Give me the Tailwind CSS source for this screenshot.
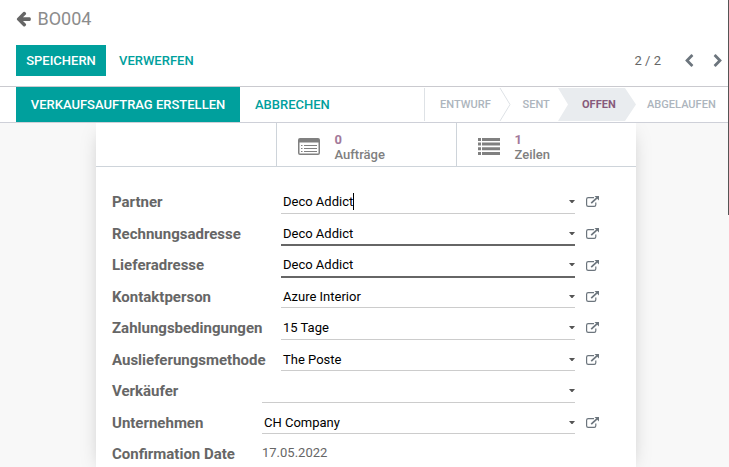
<!DOCTYPE html>
<html lang="de">
<head>
<meta charset="utf-8">
<title>BO004</title>
<script src="https://cdn.jsdelivr.net/npm/@tailwindcss/browser@4"></script>
</head>
<body class="relative flex h-[467px] w-[729px] flex-col overflow-hidden bg-[#f8f8f8] font-['Roboto',sans-serif] text-[13px] text-[#666666]">
<svg class="hidden">
  <symbol id="ext" viewBox="0 0 13 11"><path fill="none" stroke="currentColor" stroke-width="1.200" d="M8 1.600H2.200Q.6 1.600.6 3.200v5.600q0 1.600 1.600 1.600h6q1.600 0 1.600-1.600V6.500"/><path fill="none" stroke="currentColor" stroke-width="1.700" d="M5.200 7.200L11 1.800"/><path fill="currentColor" d="M8.500 0H13v4.500z"/></symbol>
  <symbol id="caret" viewBox="0 0 6 3"><path d="M0 0h6L3.500 3h-1z"/></symbol>
</svg>

<header class="h-[87px] shrink-0 border-b border-[#cacacf] bg-white">
  <div class="flex h-[45px] items-start pl-[15px]">
    <svg class="mt-[10px] h-[17px] w-[17px]" viewBox="0 0 1792 1792" fill="#666666"><path d="M1664 896v128q0 53-32.500 90.500t-84.500 37.500h-704l293 294q38 36 38 90t-38 90l-75 76q-37 37-90 37-52 0-91-37l-651-652q-37-37-37-90 0-52 37-91l651-650q38-38 91-38 52 0 90 38l75 74q38 38 38 91t-38 91l-293 293h704q52 0 84.500 37.500t32.500 90.500z"/></svg>
    <h1 class="ml-[5.500px] mt-[7px] text-[18px] leading-6 text-[#8c8c8c]">BO004</h1>
  </div>
  <div class="flex h-[31px] items-center pl-4">
    <button class="h-[31px] w-[90px] bg-[#00a09d] font-medium text-white">SPEICHERN</button>
    <button class="ml-[13px] font-medium text-[#00a09d]">VERWERFEN</button>
    <span class="ml-auto">2 / 2</span>
    <svg class="ml-[21px] h-[14px] w-[14px]" viewBox="0 0 1792 1792" fill="#6c757d"><path d="M1427 301l-531 531 531 531q19 19 19 45t-19 45l-166 166q-19 19-45 19t-45-19l-742-742q-19-19-19-45t19-45l742-742q19-19 45-19t45 19l166 166q19 19 19 45t-19 45z"/></svg>
    <svg class="ml-[15px] mr-[4px] h-[14px] w-[14px]" viewBox="0 0 1792 1792" fill="#6c757d"><path d="M1363 877l-742 742q-19 19-45 19t-45-19l-166-166q-19-19-19-45t19-45l531-531-531-531q-19-19-19-45t19-45l166-166q19-19 45-19t45 19l742 742q19 19 19 45t-19 45z"/></svg>
  </div>
</header>

<div class="relative z-10 flex h-[36px] shrink-0 border-b border-[#ced0d8] bg-white pl-4">
  <button class="h-[35px] w-[224px] bg-[#00a09d] font-medium text-white">VERKAUFSAUFTRAG ERSTELLEN</button>
  <button class="ml-[15px] font-medium text-[#00a09d]">ABBRECHEN</button>
  <div class="ml-auto mt-px flex h-[33px] w-[305px] items-center border-l border-[#dee2e6] text-[11.050px] font-medium text-[#adb5bd]">
    <span class="w-[74px] pl-[15px] pt-px">ENTWURF</span>
    <svg class="h-[33px] w-[12px]" viewBox="0 0 12 33" fill="none" stroke="#dee2e6"><path d="M1 0l10 16.500L1 33"/></svg>
    <span class="w-[47px] pl-[11.500px] pt-px">SENT</span>
    <div class="flex h-[33px] w-[78px] items-center bg-[#e9ecef] pl-[24px] pt-px font-bold text-[#875a7b] [clip-path:polygon(0_0,67px_0,100%_50%,67px_100%,0_100%,10px_50%)]">OFFEN</div>
    <span class="pl-[11px] pt-px">ABGELAUFEN</span>
  </div>
</div>

<main class="mx-auto ml-24 h-[344px] w-[540px] shrink-0 bg-white shadow-[0_5px_20px_-8px_rgba(0,0,0,0.35)]">
  <div class="flex h-[44px] justify-end border-b border-[#ced4da] text-[13px] font-medium leading-[15px] text-[#808080]">
    <div class="flex w-[180px] border-l border-[#ced4da] pl-[21px]">
      <svg class="mt-[15px] h-[17px] w-[22px]" viewBox="0 0 22 17"><path fill="#808080" fill-rule="evenodd" d="M2 0h18q2 0 2 2v13q0 2-2 2H2q-2 0-2-2V2q0-2 2-2zM1.500 4.500v10.500q0 .5.5.5h18q.5 0 .5-.5V4.500z"/><path stroke="#808080" stroke-width="1.200" d="M3 7.500h1.500M3 10.500h1.500M3 13.500h1.500M6 7.500h13M6 10.500h13M6 13.500h13"/></svg>
      <div class="ml-[14.500px] mt-[9px]"><div class="font-bold text-[#a3799a]">0</div><div>Aufträge</div></div>
    </div>
    <div class="flex w-[180px] border-l border-[#ced4da] pl-[21px]">
      <svg class="mt-[15px] h-[17px] w-[22px]" viewBox="0 0 22 17" fill="#808080"><path d="M0 0h3v3H0zM4 0h18v3H4zM0 4.600h3v3H0zM4 4.600h18v3H4zM0 9.200h3v3H0zM4 9.200h18v3H4zM0 14h3v3H0zM4 14h18v3H4z"/></svg>
      <div class="ml-[14.500px] mt-[9px]"><div class="font-bold text-[#a3799a]">1</div><div>Zeilen</div></div>
    </div>
  </div>

  <div class="px-4 pt-[25px] leading-5 text-black">
    <div class="flex h-[32px] items-start">
      <label class="w-[169px] text-[15px] font-bold text-[#666666]">Partner</label>
      <div class="flex h-[22px] w-[294px] items-start border-b border-[#cccccc] pl-[2px]"><span>Deco Addict</span><i class="mt-[1px] h-[17px] w-px bg-black"></i><svg class="ml-auto mt-[8px] h-[3px] w-[6px]" fill="#555"><use href="#caret"/></svg></div>
      <svg class="ml-[11px] mt-[4px] h-[11px] w-[13px] text-[#6c757d]"><use href="#ext"/></svg>
    </div>
    <div class="flex h-[31px] items-start">
      <label class="w-[169px] text-[15px] font-bold text-[#666666]">Rechnungsadresse</label>
      <div class="flex h-[22px] w-[294px] items-start border-b-2 border-[#666666] pl-[2px]"><span>Deco Addict</span><svg class="ml-auto mt-[8px] h-[3px] w-[6px]" fill="#555"><use href="#caret"/></svg></div>
      <svg class="ml-[11px] mt-[4px] h-[11px] w-[13px] text-[#6c757d]"><use href="#ext"/></svg>
    </div>
    <div class="flex h-[32px] items-start">
      <label class="w-[169px] text-[15px] font-bold text-[#666666]">Lieferadresse</label>
      <div class="flex h-[23px] w-[294px] items-start border-b-2 border-[#666666] pl-[2px]"><span>Deco Addict</span><svg class="ml-auto mt-[8px] h-[3px] w-[6px]" fill="#555"><use href="#caret"/></svg></div>
      <svg class="ml-[11px] mt-[5px] h-[11px] w-[13px] text-[#6c757d]"><use href="#ext"/></svg>
    </div>
    <div class="flex h-[31px] items-start">
      <label class="w-[169px] text-[15px] font-bold text-[#666666]">Kontaktperson</label>
      <div class="flex h-[21px] w-[294px] items-start border-b border-[#cccccc] pl-[2px]"><span>Azure Interior</span><svg class="ml-auto mt-[8px] h-[3px] w-[6px]" fill="#555"><use href="#caret"/></svg></div>
      <svg class="ml-[11px] mt-[4px] h-[11px] w-[13px] text-[#6c757d]"><use href="#ext"/></svg>
    </div>
    <div class="flex h-[32px] items-start">
      <label class="w-[169px] text-[15px] font-bold text-[#666666]">Zahlungsbedingungen</label>
      <div class="flex h-[22px] w-[294px] items-start border-b border-[#cccccc] pl-[2px]"><span>15 Tage</span><svg class="ml-auto mt-[8px] h-[3px] w-[6px]" fill="#555"><use href="#caret"/></svg></div>
      <svg class="ml-[11px] mt-[4px] h-[11px] w-[13px] text-[#6c757d]"><use href="#ext"/></svg>
    </div>
    <div class="flex h-[31px] items-start">
      <label class="w-[169px] text-[15px] font-bold text-[#666666]">Auslieferungsmethode</label>
      <div class="flex h-[21px] w-[294px] items-start border-b border-[#cccccc] pl-[2px]"><span>The Poste</span><svg class="ml-auto mt-[8px] h-[3px] w-[6px]" fill="#555"><use href="#caret"/></svg></div>
      <svg class="ml-[11px] mt-[4px] h-[11px] w-[13px] text-[#6c757d]"><use href="#ext"/></svg>
    </div>
    <div class="flex h-[32px] items-start">
      <label class="w-[150px] text-[15px] font-bold text-[#666666]">Verkäufer</label>
      <div class="flex h-[22px] w-[313px] items-start border-b border-[#cccccc] pl-[2px]"><svg class="ml-auto mt-[8px] h-[3px] w-[6px]" fill="#555"><use href="#caret"/></svg></div>
    </div>
    <div class="flex h-[31px] items-start">
      <label class="w-[150px] text-[15px] font-bold text-[#666666]">Unternehmen</label>
      <div class="flex h-[21px] w-[313px] items-start border-b border-[#cccccc] pl-[2px]"><span>CH Company</span><svg class="ml-auto mt-[8px] h-[3px] w-[6px]" fill="#555"><use href="#caret"/></svg></div>
      <svg class="ml-[11px] mt-[4px] h-[11px] w-[13px] text-[#6c757d]"><use href="#ext"/></svg>
    </div>
    <div class="flex h-[23px] items-start">
      <label class="w-[150px] text-[15px] font-bold text-[#666666]">Confirmation Date</label>
      <span class="-mt-px text-[#666666]">17.05.2022</span>
    </div>
  </div>
</main>

<div class="absolute right-0 top-0 z-20 h-[215px] w-px bg-[#555555]"></div>
</body>
</html>
